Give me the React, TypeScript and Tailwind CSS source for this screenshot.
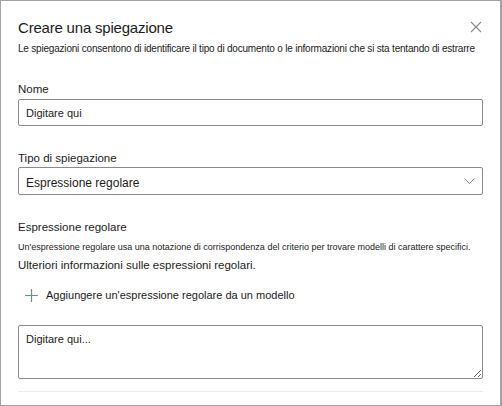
export default function App() {
  return (
    <div className="h-[406px] w-[502px] bg-white font-['Liberation_Sans',Arial,sans-serif] text-[#1b1b1b]">
      <div className="flex h-full flex-col border border-r-2 border-[#a3a3a3] pl-[17px] pr-[17px]">
        {/* Intestazione */}
        <div className="mt-[17px] flex items-start justify-between">
          <h1 className="text-[15px] leading-[20px] tracking-[-0.2px]">Creare una spiegazione</h1>
          <button className="mr-[1px] mt-[3px] text-[#8a8a8a]" aria-label="Chiudi">
            <svg width="12" height="12" viewBox="0 0 12 12" fill="none" stroke="currentColor" strokeWidth="1.1">
              <path d="M1 1l10 10M11 1L1 11" />
            </svg>
          </button>
        </div>
        <p className="mt-[4px] text-[10px] leading-[14px] tracking-[-0.2px]">
          Le spiegazioni consentono di identificare il tipo di documento o le informazioni che si sta tentando di estrarre
        </p>

        {/* Nome */}
        <label className="mt-[26px] text-[11.5px] leading-[15px]">Nome</label>
        <input
          className="mt-[2px] h-[27px] w-full rounded-[2px] border border-[#8a8a8a] px-[7px] text-[11px] outline-none placeholder:text-[#1b1b1b]"
          placeholder="Digitare qui"
        />

        {/* Tipo di spiegazione */}
        <label className="mt-[25px] text-[11.5px] leading-[15px]">Tipo di spiegazione</label>
        <div className="mt-[1px] flex h-[28px] items-center justify-between rounded-[2px] border border-[#8a8a8a] pl-[7px] pr-[7px] text-[12px]">
          <span className="mt-[3px]">Espressione regolare</span>
          <svg width="11" height="6" viewBox="0 0 11 6" fill="none" stroke="#8a8a8a" strokeWidth="1">
            <path d="M0.5 0.5l5 5 5-5" />
          </svg>
        </div>

        {/* Espressione regolare */}
        <h2 className="mt-[25px] text-[11.5px] leading-[15px]">Espressione regolare</h2>
        <p className="mt-[6px] text-[9px] leading-[12px]">
          Un'espressione regolare usa una notazione di corrispondenza del criterio per trovare modelli di carattere specifici.
        </p>
        <p className="mt-[5px] text-[11.5px] leading-[15px]">Ulteriori informazioni sulle espressioni regolari.</p>

        <button className="mt-[15px] flex items-center gap-[8px] pl-[7px] text-[11px] leading-[15px]">
          <svg width="13" height="13" viewBox="0 0 13 13" fill="none" stroke="#6a9090" strokeWidth="1.2">
            <path d="M6.5 0v13M0 6.5h13" />
          </svg>
          <span>Aggiungere un'espressione regolare da un modello</span>
        </button>

        <textarea
          className="mt-[22px] h-[54px] w-full rounded-[2px] border border-[#8a8a8a] px-[7px] py-[5px] text-[11px] outline-none placeholder:text-[#1b1b1b]"
          placeholder="Digitare qui..."
        />
        <div className="mt-[12px] h-px w-full bg-[#ececec]" />
      </div>
    </div>
  );
}
